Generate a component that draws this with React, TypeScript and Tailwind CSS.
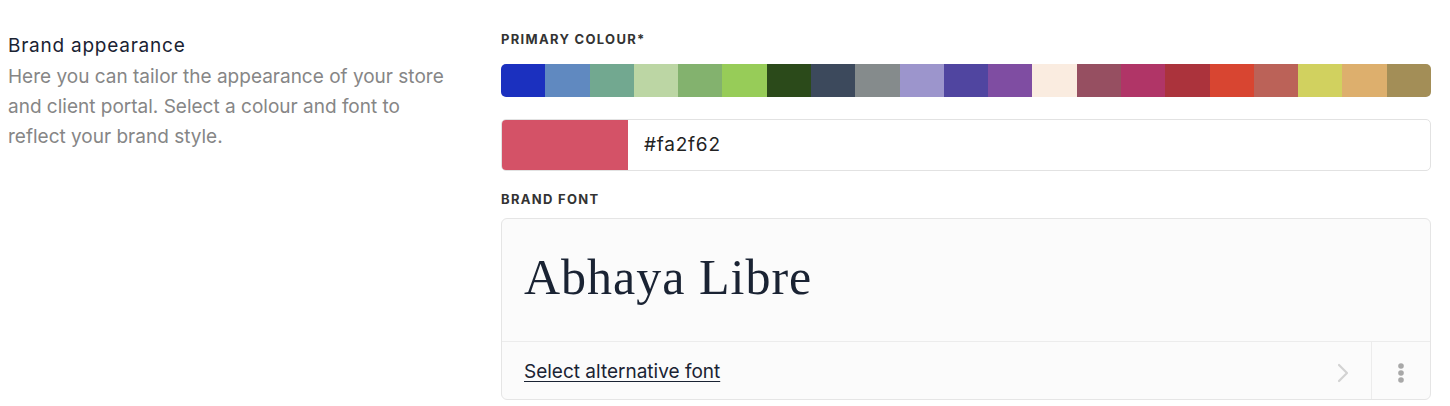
const swatches = [
  '#1b30bf',
  '#6089c0',
  '#72a890',
  '#bcd6a4',
  '#83b26e',
  '#97cc58',
  '#2b4a1a',
  '#3c495c',
  '#858b8c',
  '#9c95cc',
  '#5045a0',
  '#7f4da2',
  '#faece0',
  '#964f61',
  '#b03567',
  '#ab333c',
  '#d84531',
  '#bb6258',
  '#d1d15f',
  '#ddaf6d',
  '#a38e57',
];

export default function App() {
  return (
    <div className="flex h-[406px] w-[1450px] bg-white font-['Inter','Liberation_Sans',sans-serif]">
      {/* Intro */}
      <div className="w-[501px] shrink-0 pl-2 pt-[34px] pr-12">
        <h2 className="text-[19px] leading-6 tracking-[0.04em] text-[#1a2333]">Brand appearance</h2>
        <p className="mt-1 text-[19px] leading-[30px] text-[#868686]">
          Here you can tailor the appearance of your store and client portal. Select a colour and font to
          reflect your brand style.
        </p>
      </div>

      {/* Settings */}
      <div className="w-[930px] shrink-0 pt-[31px]">
        <label className="block text-[13px] font-bold uppercase leading-4 tracking-[0.1em] text-[#333]">
          Primary colour*
        </label>
        <div className="mt-[17px] flex h-[33px] overflow-hidden rounded-[5px]">
          {swatches.map((c) => (
            <button key={c} type="button" className="h-full flex-1" style={{ background: c }} />
          ))}
        </div>

        <div className="mt-[22px] flex h-[52px] overflow-hidden rounded-[5px] border border-[#e2e2e2]">
          <div className="w-[126px] shrink-0 bg-[#d45267]" />
          <input
            readOnly
            value="#fa2f62"
            className="min-w-0 flex-1 px-4 text-[19px] tracking-[0.04em] text-[#222] outline-none"
          />
        </div>

        <label className="mt-5 block text-[13px] font-bold uppercase leading-4 tracking-[0.1em] text-[#333]">
          Brand font
        </label>
        <div className="mt-[11px] overflow-hidden rounded-[6px] border border-[#e5e5e5] bg-[#fbfbfb]">
          <div className="flex h-[122px] items-center px-[22px] pb-[7px]">
            <span className="font-['Liberation_Serif',serif] text-[50px] leading-none tracking-[0.02em] text-[#1a2333]">
              Abhaya Libre
            </span>
          </div>
          <div className="flex h-[58px] border-t border-[#ececec]">
            <div className="flex flex-1 items-center justify-between pl-[22px] pr-[22px] pt-1">
              <a href="#" className="text-[19px] text-[#1a2333] underline underline-offset-[3px]">
                Select alternative font
              </a>
              <svg width="12" height="20" viewBox="0 0 12 20" fill="none">
                <path d="M2 2l8 8-8 8" stroke="#d2d2d2" strokeWidth="2.2" strokeLinecap="round" strokeLinejoin="round" />
              </svg>
            </div>
            <div className="flex w-[59px] items-center justify-center border-l border-[#ececec] pt-1">
              <svg width="6" height="22" viewBox="0 0 6 22">
                <circle cx="3" cy="4" r="2.8" fill="#a8a8a8" />
                <circle cx="3" cy="11" r="2.8" fill="#a8a8a8" />
                <circle cx="3" cy="18" r="2.8" fill="#a8a8a8" />
              </svg>
            </div>
          </div>
        </div>
      </div>
    </div>
  );
}
